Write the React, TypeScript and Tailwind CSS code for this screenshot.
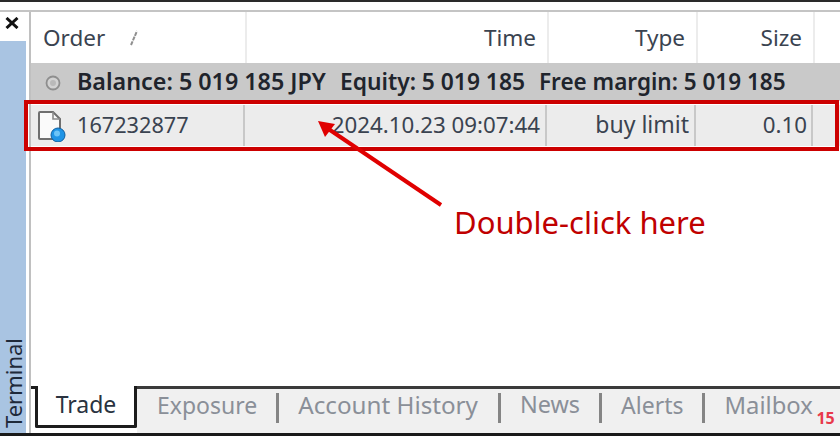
import React from "react";
import { clsx } from "clsx";

const font = { fontFamily: '"Noto Sans", "Open Sans", sans-serif' };

function Sep({ className }: { className?: string }) {
  return <div className={clsx("w-[3px] h-[30px] bg-[#858585] shrink-0", className)} />;
}

function Tab({ children, className }: { children: React.ReactNode; className?: string }) {
  return <span className={clsx("text-[#8a8f98] leading-none shrink-0 mb-[6px]", className ?? "text-[23px]")}>{children}</span>;
}

export default function App() {
  return (
    <div className="relative w-[840px] h-[436px] bg-white overflow-hidden flex flex-col" style={font}>
      <div className="h-[12px] shrink-0 border-t-[2px] border-b-[2px] border-t-[#2a2a2a] border-b-[#c4c4c4] bg-white" />
      <div className="flex flex-1 min-h-0">
        <div className="w-[31px] shrink-0 flex flex-col border-r-[2px] border-[#c0c0c0]">
          <div className="h-[29px] shrink-0 flex items-start pl-[5px] pt-[5px]">
            <svg width="14" height="12" viewBox="0 0 14 12">
              <path d="M1.5 1 L12.5 11 M12.5 1 L1.5 11" stroke="#111" strokeWidth="3" />
            </svg>
          </div>
          <div className="flex-1 bg-[#a9c4e2] flex items-end w-[26px] pb-[5px]">
            <span className="text-[#1f2a3a] text-[22px] leading-[26px] [writing-mode:vertical-rl] rotate-180">Terminal</span>
          </div>
        </div>
        <div className="flex-1 flex flex-col min-w-0">
          <div className="h-[51px] shrink-0 flex text-[#3a4350] text-[22.5px] items-stretch">
            <div className="w-[216px] border-r-2 border-[#ececec] pl-[12px] flex items-center gap-[25px]">
              Order
              <svg width="8" height="16" viewBox="0 0 8 16"><path d="M1 15 L7 1" stroke="#8f8f8f" strokeWidth="2" strokeDasharray="4 1" /></svg>
            </div>
            <div className="w-[302px] border-r-2 border-[#ececec] pr-[11px] flex items-center justify-end">Time</div>
            <div className="w-[149px] border-r-2 border-[#ececec] pr-[11px] flex items-center justify-end">Type</div>
            <div className="w-[117px] border-r-2 border-[#ececec] pr-[11px] flex items-center justify-end">Size</div>
          </div>
          <div className="h-[38px] shrink-0 bg-[#c9c9c9] flex items-center pl-[14px] text-[#20242c] font-semibold whitespace-nowrap">
            <svg width="16" height="16" viewBox="0 0 16 16" className="shrink-0 mr-[16px] mt-[2px]">
              <circle cx="8" cy="8" r="6.5" fill="#d2d2d2" stroke="#8e8e8e" strokeWidth="1.8" />
              <circle cx="8" cy="8" r="3" fill="#b9b9b9" />
            </svg>
            <div className="flex items-baseline gap-[14px] text-[22.8px]">
              <span className="text-[23.3px]">Balance: 5 019 185 JPY</span>
              <span>Equity: 5 019 185</span>
              <span className="text-[22.5px]">Free margin: 5 019 185</span>
            </div>
          </div>
          <div className="h-[4px] shrink-0" />
          <div className="h-[41px] shrink-0 bg-[#ececec] flex text-[#3a4350] text-[22.3px] items-stretch whitespace-nowrap">
            <div className="w-[214px] border-r-2 border-[#c8c8c8] pl-[6px] flex items-center gap-[10px]">
              <svg width="30" height="32" viewBox="0 0 30 32" className="shrink-0">
                <path d="M2 3 Q2 2 3 2 H16 L23 9 V28 Q23 29 22 29 H3 Q2 29 2 28 Z" fill="#fafafa" stroke="#6f6f6f" strokeWidth="2" />
                <path d="M16 2 V9 H23" fill="none" stroke="#8a8a8a" strokeWidth="1.6" />
                <circle cx="21" cy="25" r="7" fill="#1f94e6" stroke="#0f5f9f" strokeWidth="1" />
                <circle cx="20" cy="23.5" r="3" fill="#6cc4f7" />
              </svg>
              <span className="text-[21.7px]">167232877</span>
            </div>
            <div className="w-[302px] border-r-2 border-[#c8c8c8] pr-[5px] pb-[2px] flex items-center justify-end">2024.10.23 09:07:44</div>
            <div className="w-[149px] border-r-2 border-[#c8c8c8] pr-[5px] pb-[2px] flex items-center justify-end text-[23px]">buy limit</div>
            <div className="w-[117px] border-r-2 border-[#c8c8c8] pr-[4px] pb-[2px] flex items-center justify-end">0.10</div>
          </div>
          <div className="flex-1" />
          <div className="h-[47px] shrink-0 flex items-stretch">
            <div className="w-[4px] h-[3px] shrink-0 bg-[#1c1c1c]" />
            <div className="w-[102px] h-[42px] shrink-0 border-l-[3px] border-r-[3px] border-b-[3px] border-[#1c1c1c] rounded-b-[2px] flex items-center justify-center pb-[2px] text-[#2a3340] text-[23px] bg-white">Trade</div>
            <div className="flex-1 border-t-[3px] border-[#3a3a3a] bg-[#f0f0f0] flex items-center pl-[20px] pb-[6px] gap-[19px] whitespace-nowrap">
              <Tab>Exposure</Tab>
              <Sep />
              <Tab className="text-[24.2px]">Account History</Tab>
              <Sep className="ml-[1px]" />
              <Tab className="text-[23.4px]">News</Tab>
              <Sep />
              <Tab>Alerts</Tab>
              <Sep />
              <div className="relative shrink-0 mb-[2px]">
                <span className="text-[#8a8f98] text-[23.8px] leading-none">Mailbox</span>
                <span className="absolute left-[92px] top-[16px] text-[16px] font-bold leading-none text-[#e8394a]">15</span>
              </div>
            </div>
          </div>
        </div>
      </div>
      <div className="h-[3px] shrink-0 bg-[#1a1a1a]" />

      <div className="absolute left-[24px] top-[100px] w-[815px] h-[51px] border-[4px] border-[#cc0000]" />
      <svg className="absolute left-0 top-0" width="840" height="436" viewBox="0 0 840 436">
        <path d="M441 205 L327 128" stroke="#e00000" strokeWidth="4" />
        <path d="M318 121 L335 124 L325 137 Z" fill="#e00000" />
      </svg>
      <div className="absolute left-[454px] top-[201px] text-[#c00000] text-[31px] leading-[42px] whitespace-nowrap">Double-click here</div>
    </div>
  );
}
